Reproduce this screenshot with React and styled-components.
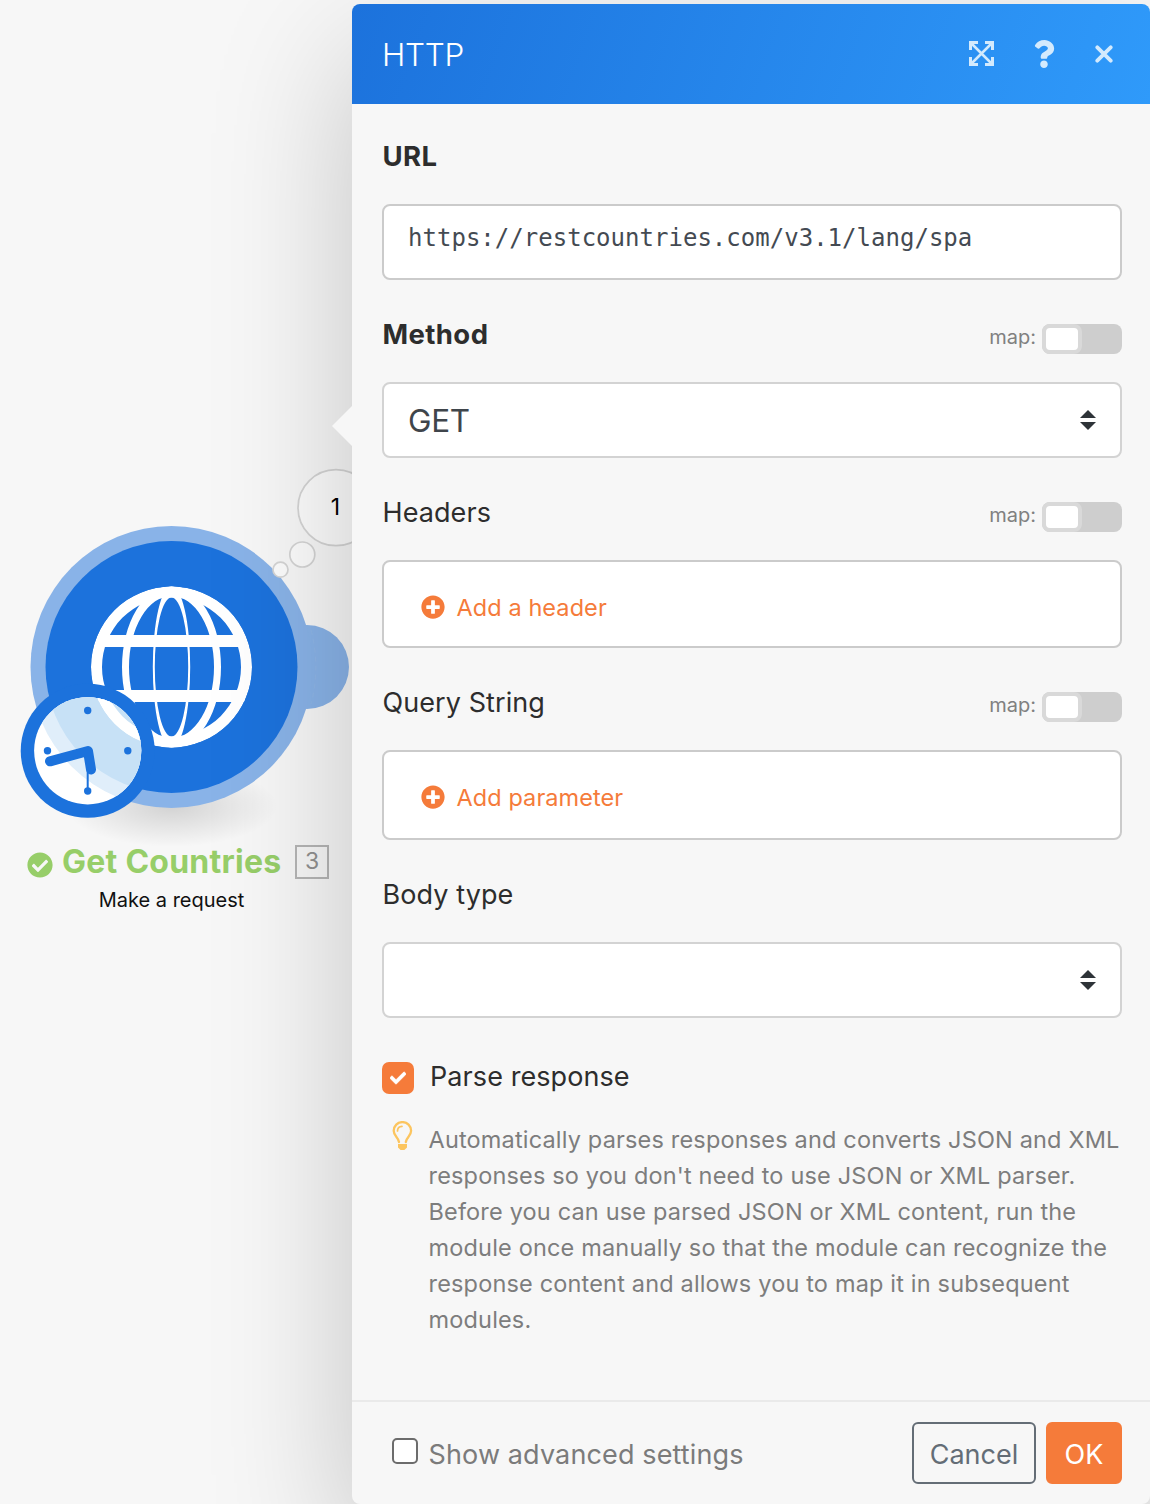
import React from "react";
import styled, { createGlobalStyle } from "styled-components";
import { FaCheck, FaCheckCircle, FaPlusCircle, FaQuestion } from "react-icons/fa";

const GlobalStyle = createGlobalStyle`
  *, *::before, *::after { box-sizing: border-box; }
  body {
    margin: 0;
    background: #f7f7f7;
    font-family: Inter, "Liberation Sans", sans-serif;
    overflow: hidden;
  }
`;

const Shell = styled.div`
  display: grid;
  grid-template-columns: 352px 798px;
  width: 1150px;
  height: 1504px;
  padding-top: 4px;
  overflow: hidden;
`;

const Canvas = styled.section`
  position: relative;
`;

const ModuleNode = styled.div`
  position: absolute;
  left: 0;
  top: 456px;
  width: 352px;
  height: 470px;
`;

const ModuleArt = styled.svg`
  display: block;
  width: 352px;
  height: 380px;
`;

const ModuleTitle = styled.div`
  display: flex;
  align-items: center;
  height: 40px;
  margin-top: 1px;
  padding-left: 27px;
`;

const StatusIcon = styled(FaCheckCircle)`
  width: 26px;
  height: 26px;
  margin: 8px 9px 0 0;
  color: #97ce69;
`;

const ModuleName = styled.strong`
  width: 233px;
  color: #97ce69;
  font-size: 32px;
  font-weight: 700;
  letter-spacing: 0.25px;
  white-space: nowrap;
`;

const ModuleIndex = styled.span`
  width: 34px;
  height: 34px;
  margin-top: 1px;
  border: 2px solid #b5b5b5;
  color: #909090;
  font-size: 23px;
  line-height: 29px;
  text-align: center;
`;

const ModuleAction = styled.div`
  width: 343px;
  padding-top: 7px;
  color: #111;
  font-size: 20px;
  line-height: 24px;
  text-align: center;
`;

const Panel = styled.main`
  position: relative;
  display: flex;
  flex-direction: column;
  height: 1500px;
  border-radius: 8px;
  background: #f7f7f7;
  box-shadow: 0 50px 140px rgba(0, 0, 0, 0.21);

  &::before {
    content: "";
    position: absolute;
    left: -20px;
    top: 402px;
    border: 20px solid transparent;
    border-left-width: 0;
    border-right-color: #f7f7f7;
  }
`;

const PanelHeader = styled.header`
  display: flex;
  align-items: center;
  height: 100px;
  padding: 0 37px 0 30px;
  border-radius: 8px 8px 0 0;
  background: linear-gradient(110deg, #1c72dc, #2f9afa);
  color: #d3eafd;
`;

const PanelTitle = styled.h1`
  flex: 1;
  margin: 0;
  color: #fff;
  font-size: 31.500px;
  font-weight: 350;
  letter-spacing: -0.3px;
`;

const HeaderActions = styled.div`
  display: flex;
  align-items: center;
  padding-bottom: 1px;

  svg { display: block; }
`;

const HelpIcon = styled(FaQuestion)`
  margin: 0 37px 0 36px;
`;

const PanelBody = styled.div`
  flex: 1;
  padding: 4px 28px 0 30px;
`;

const Field = styled.div`
  margin-bottom: 6px;
`;

const LabelRow = styled.div`
  display: flex;
  align-items: center;
  justify-content: space-between;
  height: 96px;
`;

const Label = styled.label`
  padding-top: ${(p) => (p.$required ? 0 : 1)}px;
  padding-bottom: ${(p) => (p.$required ? 1 : 0)}px;
  padding-left: 0.5px;
  color: #2d2d2d;
  font-size: ${(p) => (p.$required ? 27.5 : 27)}px;
  font-weight: ${(p) => (p.$required ? 700 : 400)};
  letter-spacing: ${(p) => (p.$required ? 0.4 : 0.08)}px;
`;

const MapControl = styled.div`
  display: flex;
  align-items: center;
  gap: 6px;
  padding-top: 10px;
  color: #808080;
  font-size: 20px;

  span { padding-bottom: 4px; }
`;

const Track = styled.div`
  width: 80px;
  height: 30px;
  border-radius: 8px;
  background: #cecece;
`;

const Thumb = styled.div`
  width: 40px;
  height: 30px;
  border: 4px solid #d9d9d9;
  border-radius: 8px;
  background: #fff;
`;

const Box = styled.div`
  display: flex;
  align-items: center;
  height: ${(p) => p.$height || 76}px;
  padding: 0 24px;
  border: 2px solid ${(p) => (p.$select ? "#d3d3d3" : "#cbcbcb")};
  border-radius: 8px;
  background: #fff;
`;

const UrlValue = styled.span`
  margin-top: -8px;
  color: #444a52;
  font-family: "DejaVu Sans Mono", monospace;
  font-size: 24px;
  letter-spacing: 0.02px;
`;

const SelectValue = styled.span`
  flex: 1;
  padding-top: 1px;
  color: #3f454b;
  font-size: 31.500px;
  letter-spacing: -0.3px;
`;

const AddButton = styled.button`
  display: flex;
  align-items: center;
  gap: 11.500px;
  padding: ${(p) => p.$offset}px 0 0 13px;
  border: 0;
  background: none;
  color: #f57b3a;
  font: 400 23.500px Inter, sans-serif;
  letter-spacing: 0.08px;

  svg {
    width: 24px;
    height: 24px;
    margin-top: -1px;
  }
`;

const CheckRow = styled.div`
  display: flex;
  align-items: center;
  height: 32px;
  margin-top: 44px;

  label { padding: 0 0 3px 1px; }
`;

const CheckedBox = styled.span`
  display: grid;
  place-items: center;
  width: 32px;
  height: 32px;
  margin-right: 15px;
  border-radius: 7px;
  background: #f57b3a;
  color: #fff;

  path { stroke: #fff; stroke-width: 24px; }
`;

const Help = styled.div`
  display: grid;
  grid-template-columns: 46.500px 1fr;
  margin-top: 26px;
  padding-top: 2px;

  svg { margin: -1px 0 0 10px; }
`;

const HelpText = styled.p`
  margin: 0;
  color: #7d7d7d;
  font-size: 23.500px;
  line-height: 36px;
  letter-spacing: 0.17px;
  white-space: nowrap;
`;

const PanelFooter = styled.footer`
  display: flex;
  align-items: center;
  height: 104px;
  padding: 0 28px 0 40px;
  border-top: 2px solid #eaeaea;
`;

const EmptyBox = styled.span`
  width: 26px;
  height: 26px;
  margin: -4px 10.500px 0 0;
  border: 2px solid #6c6c6c;
  border-radius: 5px;
  background: #fff;
`;

const AdvancedLabel = styled.span`
  flex: 1;
  padding-top: 3px;
  color: #7b7b7b;
  font-size: 27px;
  letter-spacing: 0.13px;
`;

const FooterButton = styled.button`
  width: ${(p) => p.$width}px;
  height: 62px;
  margin-left: 10px;
  padding: 3px 0 0;
  border: 2px solid ${(p) => (p.$primary ? "#f57b3a" : "#646d76")};
  border-radius: 6px;
  background: ${(p) => (p.$primary ? "#f57b3a" : "transparent")};
  color: ${(p) => (p.$primary ? "#fff" : "#646d76")};
  font: 400 27px Inter, sans-serif;
`;

const ellipse = (rx, ry) =>
  `M${171.5 - rx} 667a${rx} ${ry} 0 1 0 ${rx * 2} 0a${rx} ${ry} 0 1 0 ${-rx * 2} 0Z`;

const Globe = () => (
  <g fill="#fff" fillRule="evenodd" clipPath="url(#globeClip)">
    <path d={ellipse(80.5, 80.5) + ellipse(69.5, 69.5)} />
    <path d={ellipse(49.5, 81) + ellipse(42.5, 71)} />
    <path d={ellipse(18.7, 81) + ellipse(16.7, 69.5)} />
    <path d="M98 635h147v12H98zM98 690h147v12H98z" />
  </g>
);

const HttpModule = () => (
  <ModuleArt viewBox="0 460 352 380" overflow="visible">
    <defs>
      <clipPath id="globeClip"><circle cx="171.5" cy="667" r="80.5" /></clipPath>
      <clipPath id="clockClip"><circle cx="87.7" cy="750.8" r="53.6" /></clipPath>
      <radialGradient id="ground">
        <stop offset="0" stopColor="#000" stopOpacity=".15" />
        <stop offset=".5" stopColor="#000" stopOpacity=".075" />
        <stop offset="1" stopColor="#000" stopOpacity="0" />
      </radialGradient>
    </defs>
    <ellipse cx="171.5" cy="806" rx="106" ry="41" fill="url(#ground)" />
    <circle cx="307" cy="667" r="42" fill="#89b3e8" />
    <circle cx="171.5" cy="667" r="141" fill="#89b3e8" />
    <path d="M311 630a144 144 0 0 1 0 74" fill="none" stroke="#95b9e6" strokeDasharray="5 4" opacity=".5" />
    <circle cx="171.5" cy="667" r="126" fill="#1c72dc" />
    <Globe />
    <circle cx="87.7" cy="750.8" r="67" fill="#1c72dc" />
    <g clipPath="url(#clockClip)">
      <rect x="30" y="690" width="120" height="120" fill="#fff" />
      <circle cx="171.5" cy="667" r="141" fill="#e0eefa" />
      <circle cx="171.5" cy="667" r="126" fill="#c7e1f6" />
      <Globe />
    </g>
    <g fill="#1c72dc">
      <circle cx="87.7" cy="710.5" r="3.7" />
      <circle cx="47.5" cy="750.8" r="3.7" />
      <circle cx="127.8" cy="750.8" r="3.7" />
      <circle cx="87.7" cy="791" r="3.7" />
    </g>
    <g fill="none" stroke="#1c72dc" strokeLinecap="round" strokeLinejoin="round">
      <path d="M50 761.3 88 751l3 18.500" strokeWidth="10" />
      <path d="M87.7 768v22" strokeWidth="2" />
    </g>
    <g fill="#fcfcfc" stroke="#d4d4d4" strokeWidth="1.7">
      <circle cx="336" cy="507.700" r="38" />
      <circle cx="302.300" cy="554.500" r="12.500" />
      <circle cx="280.500" cy="569.700" r="7.500" />
    </g>
    <text x="335.500" y="515" fontFamily="Inter, sans-serif" fontSize="23" textAnchor="middle">1</text>
  </ModuleArt>
);

const ExpandIcon = () => (
  <svg width="25" height="25" viewBox="0 0 25 25" fill="none" stroke="currentColor">
    <path d="M1.500 9V1.500H9M16 1.500h7.500V9M23.500 16v7.500H16M9 23.500H1.500V16" strokeWidth="3" />
    <path d="m2 2 21 21M23 2 2 23" strokeWidth="2.500" />
  </svg>
);

const CloseIcon = () => (
  <svg width="18" height="18" viewBox="0 0 18 18" stroke="currentColor" strokeWidth="3.800" strokeLinecap="round">
    <path d="m2.300 2.300 13.400 13.400M15.700 2.300 2.300 15.700" />
  </svg>
);

const BulbIcon = () => (
  <svg width="21" height="30" viewBox="0 0 21 30" fill="none" stroke="#fcc55f" strokeWidth="2.300" strokeLinecap="round">
    <path d="M7 21C6.400 16.500 1.700 15 1.700 9.800a8.700 8.700 0 0 1 17.400 0c0 5.200-4.700 6.700-5.300 11.200" />
    <path d="M5.500 10c0-2.800 2-4.600 4.500-4.700" strokeWidth="1.700" />
    <path d="M6 23h9v3.500l-2.600 2.500H8.600L6 26.500z" fill="#fcc55f" stroke="none" />
  </svg>
);

const SortIcon = () => (
  <svg width="16" height="20" viewBox="0 0 16 20" fill="#2e3338">
    <path d="M0 8 8 0l8 8zM0 12l8 8 8-8z" />
  </svg>
);

const MapToggle = () => (
  <MapControl>
    <span>map:</span>
    <Track><Thumb /></Track>
  </MapControl>
);

const FormField = ({ label, required, map, children }) => (
  <Field>
    <LabelRow>
      <Label $required={required}>{label}</Label>
      {map && <MapToggle />}
    </LabelRow>
    {children}
  </Field>
);

export default function App() {
  return (
    <>
      <GlobalStyle />
      <Shell>
        <Canvas>
          <ModuleNode>
            <HttpModule />
            <ModuleTitle>
              <StatusIcon />
              <ModuleName>Get Countries</ModuleName>
              <ModuleIndex>3</ModuleIndex>
            </ModuleTitle>
            <ModuleAction>Make a request</ModuleAction>
          </ModuleNode>
        </Canvas>
        <Panel>
          <PanelHeader>
            <PanelTitle>HTTP</PanelTitle>
            <HeaderActions>
              <ExpandIcon />
              <HelpIcon size={28} />
              <CloseIcon />
            </HeaderActions>
          </PanelHeader>
          <PanelBody>
            <FormField label="URL" required>
              <Box><UrlValue>https://restcountries.com/v3.1/lang/spa</UrlValue></Box>
            </FormField>
            <FormField label="Method" required map>
              <Box $select><SelectValue>GET</SelectValue><SortIcon /></Box>
            </FormField>
            <FormField label="Headers" map>
              <Box $height={88}><AddButton $offset={6}><FaPlusCircle />Add a header</AddButton></Box>
            </FormField>
            <FormField label="Query String" map>
              <Box $height={90}><AddButton $offset={4}><FaPlusCircle />Add parameter</AddButton></Box>
            </FormField>
            <FormField label="Body type">
              <Box $select><SelectValue /><SortIcon /></Box>
            </FormField>
            <CheckRow>
              <CheckedBox><FaCheck size={16} /></CheckedBox>
              <Label>Parse response</Label>
            </CheckRow>
            <Help>
              <BulbIcon />
              <HelpText>
                Automatically parses responses and converts JSON and XML<br />
                responses so you don't need to use JSON or XML parser.<br />
                Before you can use parsed JSON or XML content, run the<br />
                module once manually so that the module can recognize the<br />
                response content and allows you to map it in subsequent<br />
                modules.
              </HelpText>
            </Help>
          </PanelBody>
          <PanelFooter>
            <EmptyBox />
            <AdvancedLabel>Show advanced settings</AdvancedLabel>
            <FooterButton $width={124}>Cancel</FooterButton>
            <FooterButton $width={76} $primary>OK</FooterButton>
          </PanelFooter>
        </Panel>
      </Shell>
    </>
  );
}
